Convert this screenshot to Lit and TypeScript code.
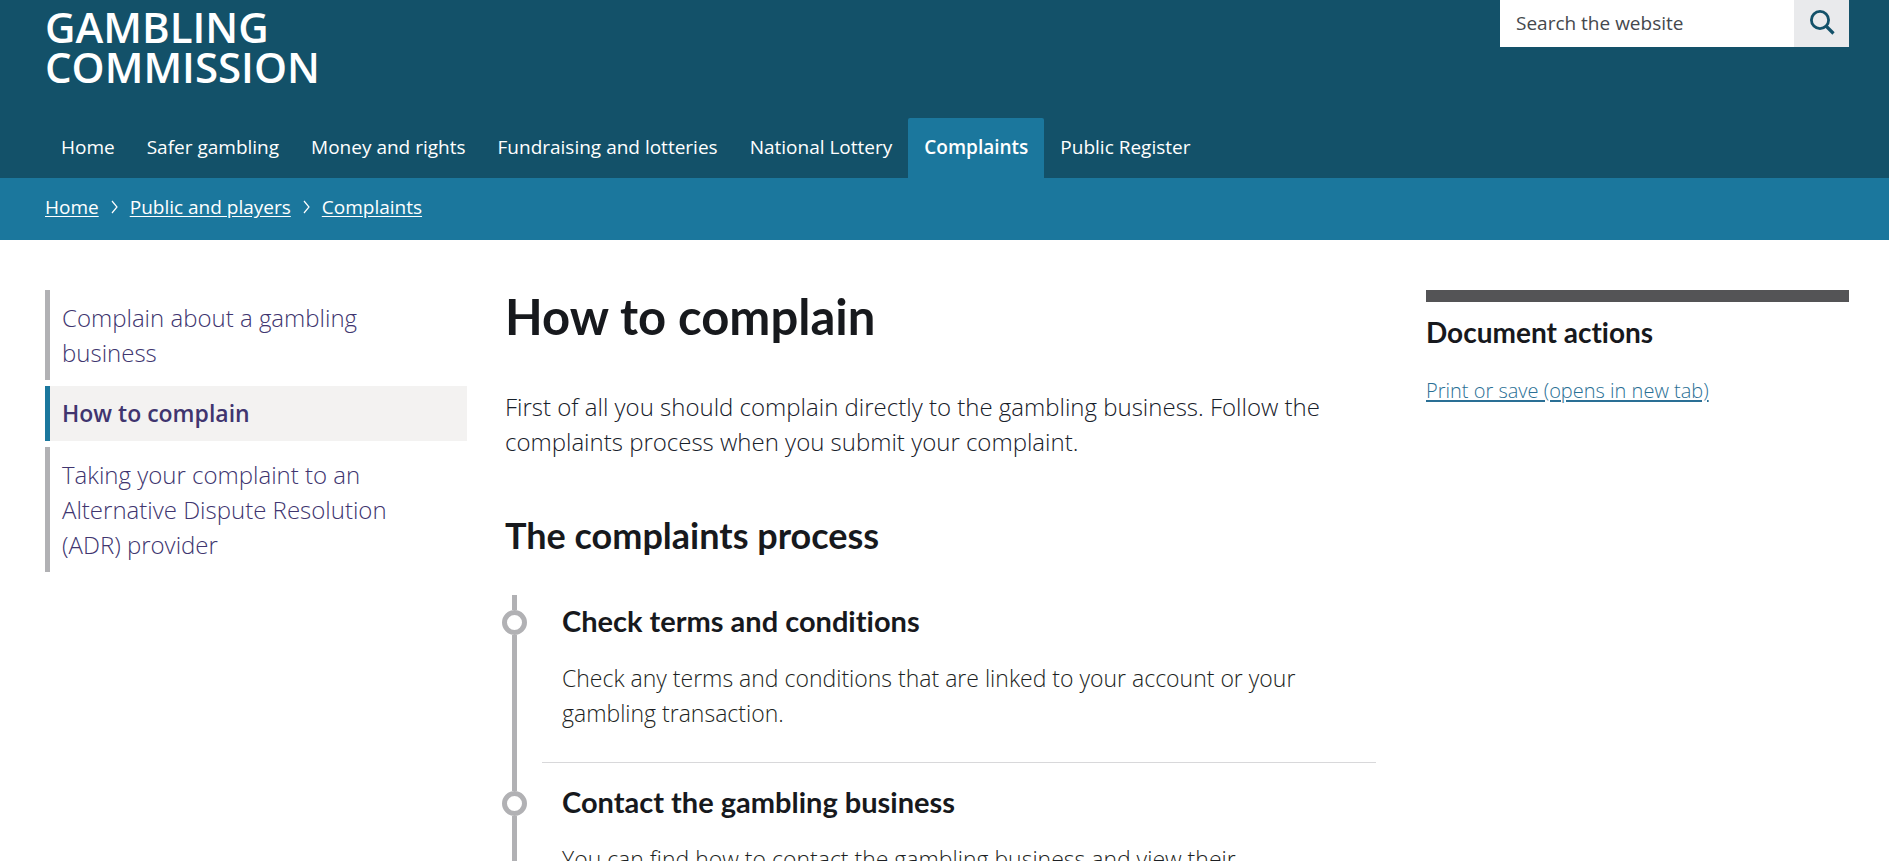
import { LitElement, html, css, svg } from "lit";
import { customElement } from "lit/decorators.js";
import { classMap } from "lit/directives/class-map.js";

const NAV = [
  "Home",
  "Safer gambling",
  "Money and rights",
  "Fundraising and lotteries",
  "National Lottery",
  "Complaints",
  "Public Register",
];

const CRUMBS = ["Home", "Public and players", "Complaints"];

const SECTION_PAGES = [
  "Complain about a gambling business",
  "How to complain",
  "Taking your complaint to an Alternative Dispute Resolution (ADR) provider",
];

const STEPS = [
  {
    title: "Check terms and conditions",
    text: "Check any terms and conditions that are linked to your account or your gambling transaction.",
  },
  {
    title: "Contact the gambling business",
    text: "You can find how to contact the gambling business and view their",
  },
];

const chevron = svg`<path d="M1 1 L6 7 L1 13" fill="none" stroke="currentColor" stroke-width="1.2" />`;

@customElement("site-header")
export class SiteHeader extends LitElement {
  static styles = css`
    :host {
      display: block;
      color: #fff;
    }
    a {
      color: inherit;
    }
    .banner {
      background: #135169;
      padding: 0 40px 0 45px;
    }
    .top {
      display: flex;
      justify-content: space-between;
      align-items: flex-start;
      height: 118px;
    }
    .logo {
      padding-top: 7px;
      font: 600 42px/40px "Open Sans", "Noto Sans", sans-serif;
      text-decoration: none;
      text-transform: uppercase;
    }
    .logo span {
      display: block;
    }
    .search {
      display: flex;
      width: 349px;
      height: 47px;
    }
    .search input {
      flex: 1;
      min-width: 0;
      box-sizing: border-box;
      border: 0;
      border-radius: 0;
      padding: 0 16px 2px;
      background: #fff;
      color: #3c3f44;
      font: 400 19px/28px "Open Sans", sans-serif;
    }
    .search input::placeholder {
      color: #45484d;
      opacity: 1;
    }
    .search button {
      width: 55px;
      border: 0;
      padding: 0 0 3px;
      background: #e9eaec;
      color: #135169;
      display: flex;
      align-items: center;
      justify-content: center;
    }
    .nav {
      display: flex;
      font: 500 19px/28px "Open Sans", sans-serif;
    }
    .nav a {
      padding: 15px 16px 17px;
      text-decoration: none;
      white-space: nowrap;
    }
    .nav .current {
      background: #1b779d;
      border-radius: 2px 2px 0 0;
      font-weight: 600;
    }
    .crumbs {
      display: flex;
      align-items: center;
      gap: 12px;
      padding: 15px 40px 19px 45px;
      background: #1b779d;
      font: 500 19px/28px "Open Sans", sans-serif;
    }
    .crumbs a {
      text-underline-offset: 2px;
    }
  `;

  render() {
    return html`
      <header>
        <div class="banner">
          <div class="top">
            <a class="logo" href="#"><span>Gambling</span><span>Commission</span></a>
            <form class="search" role="search">
              <input type="text" aria-label="Search the website" placeholder="Search the website" />
              <button type="button" aria-label="Search">
                <svg width="26" height="26" viewBox="0 0 26 26" fill="none" stroke="currentColor">
                  <circle cx="11" cy="11" r="8.6" stroke-width="2.8" />
                  <path d="M17 17 L24.5 24.5" stroke-width="3.2" />
                </svg>
              </button>
            </form>
          </div>
          <nav class="nav" aria-label="Main">
            ${NAV.map(
              (item) =>
                html`<a href="#" class=${classMap({ current: item === "Complaints" })}>${item}</a>`
            )}
          </nav>
        </div>
        <nav class="crumbs" aria-label="Breadcrumb">
          ${CRUMBS.map(
            (item, i) => html`${i > 0
                ? html`<svg width="7" height="14" viewBox="0 0 7 14" aria-hidden="true">${chevron}</svg>`
                : null}<a href="#">${item}</a>`
          )}
        </nav>
      </header>
    `;
  }
}

@customElement("process-steps")
export class ProcessSteps extends LitElement {
  static styles = css`
    :host {
      display: block;
    }
    .steps {
      list-style: none;
      margin: 0 0 0 -3px;
      padding: 0;
    }
    .step {
      display: grid;
      grid-template-columns: 25px minmax(0, 1fr);
      column-gap: 15px;
    }
    .rail {
      display: flex;
      flex-direction: column;
      align-items: center;
    }
    .lead,
    .tail {
      width: 5px;
      background: #b1b1b4;
    }
    .lead {
      height: 28px;
    }
    .tail {
      flex: 1;
    }
    .dot {
      box-sizing: border-box;
      width: 25px;
      height: 25px;
      border: 5px solid #b1b1b4;
      border-radius: 50%;
    }
    .body {
      padding: 21px 20px 31px;
      border-bottom: 1px solid #d8d8da;
    }
    .step:first-child .lead {
      height: 15px;
    }
    .step:first-child .body {
      padding-top: 8px;
    }
    h3 {
      margin: 0 0 22px;
      font: 700 29px/36px Lato, sans-serif;
      font-variant-ligatures: none;
      color: #17191d;
    }
    p {
      margin: 0;
      font: 300 23px/35px "Open Sans", sans-serif;
      color: #1d1f23;
    }
  `;

  render() {
    return html`
      <ol class="steps">
        ${STEPS.map(
          (step) => html`
            <li class="step">
              <div class="rail">
                <span class="lead"></span><span class="dot"></span><span class="tail"></span>
              </div>
              <div class="body">
                <h3>${step.title}</h3>
                <p>${step.text}</p>
              </div>
            </li>
          `
        )}
      </ol>
    `;
  }
}

@customElement("app-root")
export class AppRoot extends LitElement {
  static styles = css`
    :host {
      display: block;
      height: 100vh;
      overflow: hidden;
      background: #fff;
      font: 300 24px/35px "Open Sans", sans-serif;
      color: #17202a;
    }
    .page {
      display: grid;
      grid-template-columns: minmax(0, 422fr) minmax(0, 871fr) minmax(0, 435fr);
      column-gap: 38px;
      align-items: start;
      padding: 50px 40px 50px 45px;
    }
    .side {
      display: flex;
      flex-direction: column;
      gap: 6px;
    }
    .side a {
      border-left: 5px solid #b1b1b4;
      padding: 10px 60px 10px 12px;
      color: #40356f;
      text-decoration: none;
    }
    .side .current {
      border-color: #1b779d;
      background: #f3f2f1;
      font-size: 23px;
      font-weight: 600;
    }
    h1,
    h2 {
      margin: 0;
      font-family: Lato, sans-serif;
      font-weight: 700;
      font-variant-ligatures: none;
      color: #17191d;
    }
    h1 {
      font-size: 49px;
      line-height: 52px;
    }
    .intro {
      margin: 47px 0 56px;
    }
    .heading {
      font-size: 36px;
      line-height: 40px;
      margin-bottom: 40px;
    }
    .actions {
      margin-left: 12px;
      border-top: 12px solid #545456;
    }
    .actions h2 {
      margin: 12px 0 27px;
      font-size: 28px;
      line-height: 36px;
    }
    .actions a {
      display: block;
      font-size: 20px;
      line-height: 28px;
      color: #2a6f95;
      text-underline-offset: 2px;
    }
  `;

  render() {
    return html`
      <site-header></site-header>
      <div class="page">
        <nav class="side" aria-label="Complaints">
          ${SECTION_PAGES.map(
            (item) =>
              html`<a href="#" class=${classMap({ current: item === "How to complain" })}>${item}</a>`
          )}
        </nav>
        <main>
          <h1>How to complain</h1>
          <p class="intro">
            First of all you should complain directly to the gambling business. Follow the
            complaints process when you submit your complaint.
          </p>
          <h2 class="heading">The complaints process</h2>
          <process-steps></process-steps>
        </main>
        <aside class="actions">
          <h2>Document actions</h2>
          <a href="#">Print or save (opens in new tab)</a>
        </aside>
      </div>
    `;
  }
}
